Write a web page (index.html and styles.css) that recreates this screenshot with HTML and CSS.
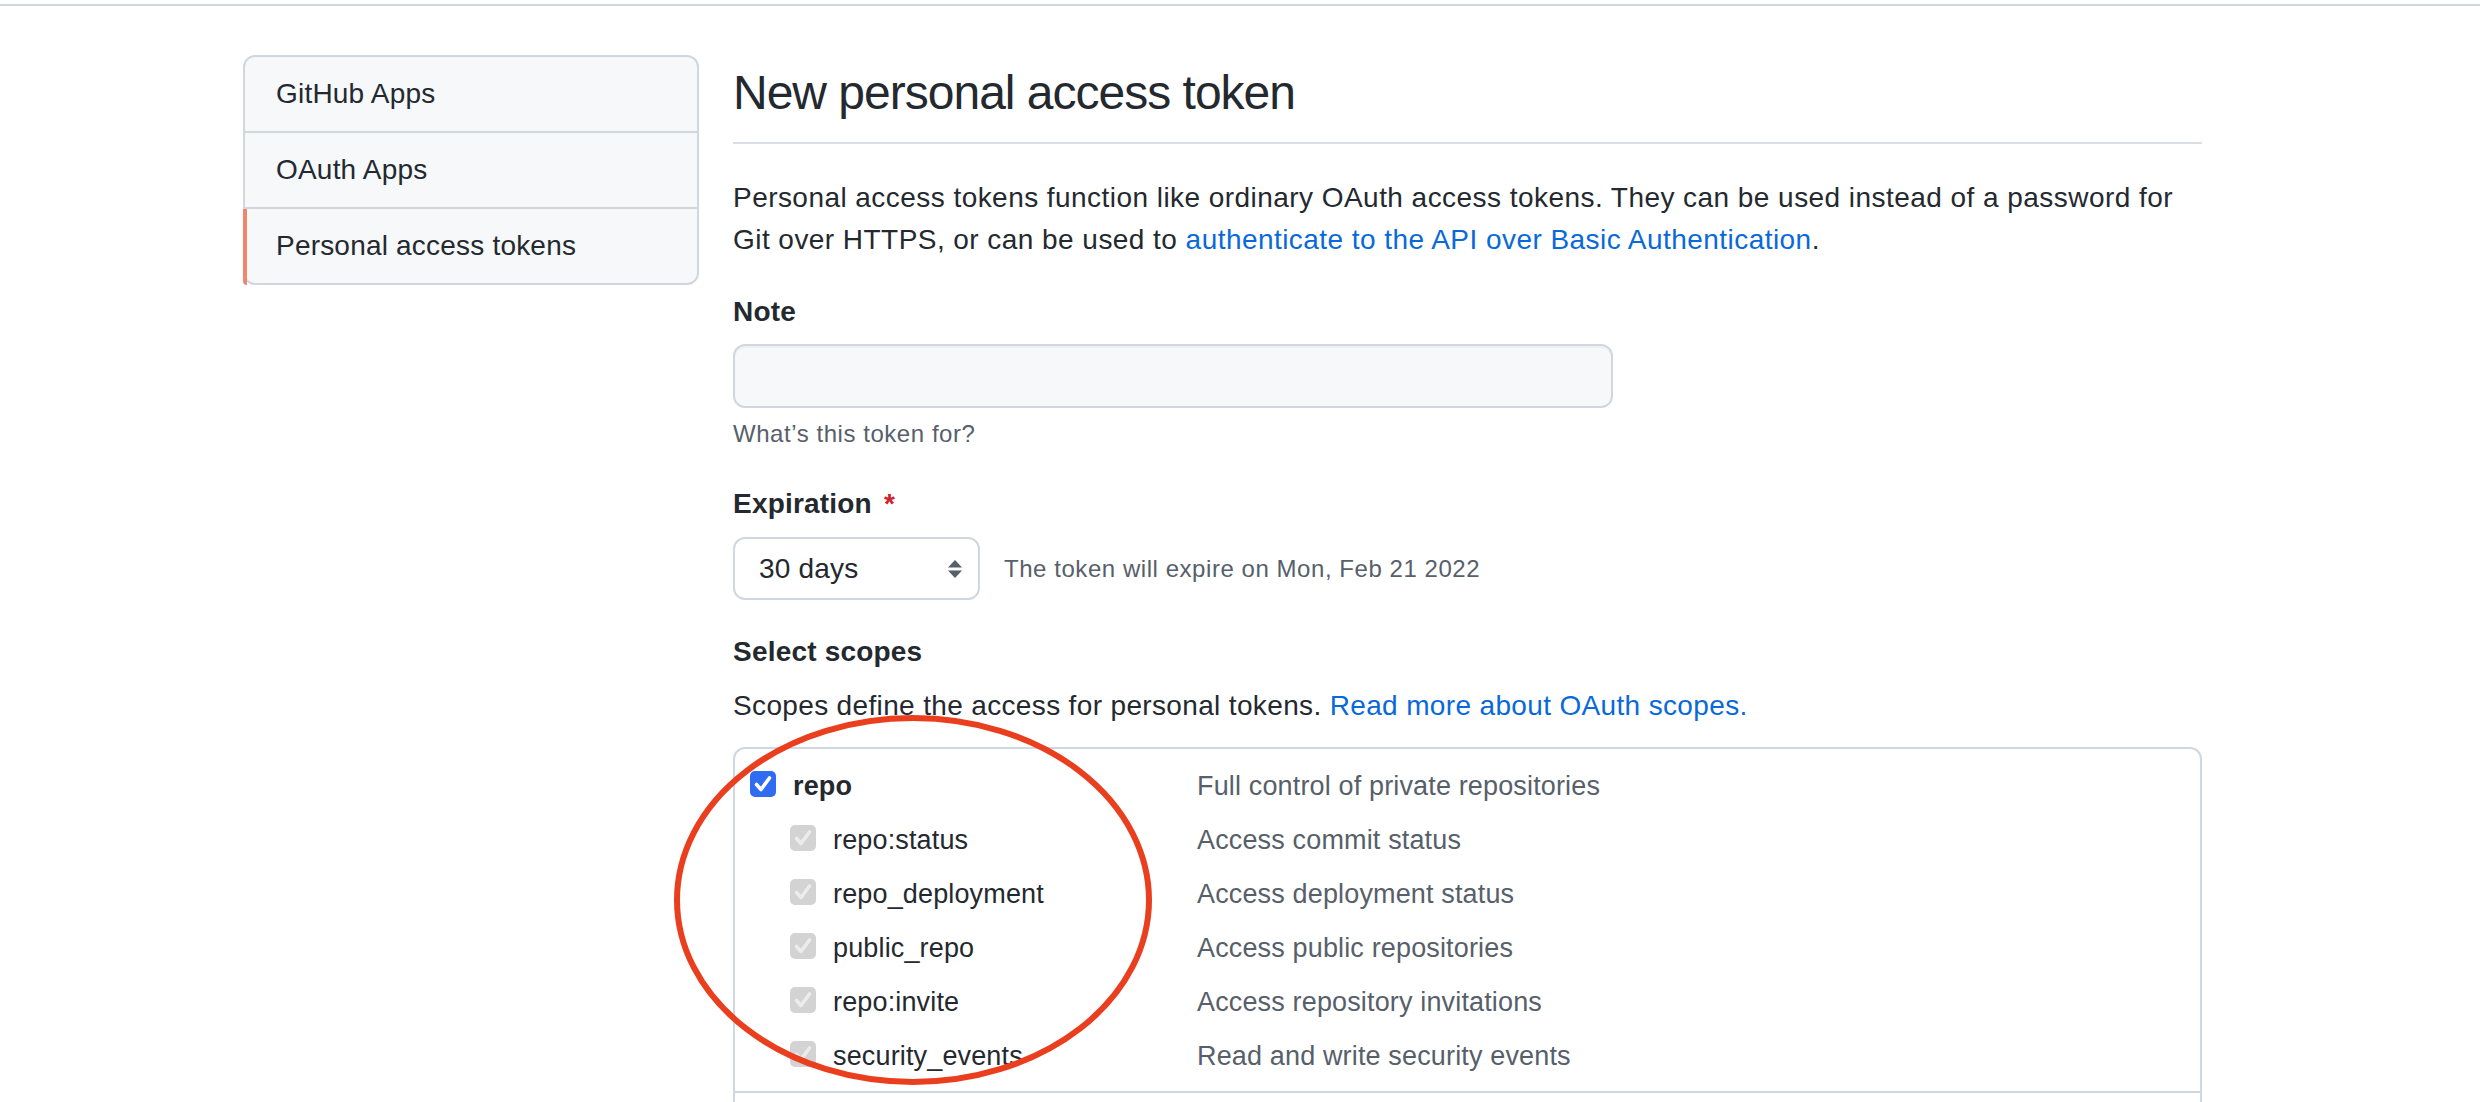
FILE: index.html
```html
<!DOCTYPE html>
<html lang="en">
<head>
<meta charset="utf-8">
<title>New personal access token</title>
<link rel="stylesheet" href="styles.css">
</head>
<body>
<div class="page">
  <div class="topbar"></div>
  <div class="layout">
    <nav class="side-nav">
      <a class="nav-item">GitHub Apps</a>
      <a class="nav-item">OAuth Apps</a>
      <a class="nav-item selected">Personal access tokens</a>
    </nav>
    <main class="main">
      <h2 class="subhead">New personal access token</h2>
      <p class="intro">Personal access tokens function like ordinary OAuth access tokens. They can be used instead of a password for Git over HTTPS, or can be used to <a class="link">authenticate to the API over Basic Authentication</a>.</p>

      <label class="field-label note-label">Note</label>
      <div class="text-input"></div>
      <p class="note">What’s this token for?</p>

      <label class="field-label exp-label">Expiration <span class="required">*</span></label>
      <div class="exp-row">
        <div class="select">
          <span>30 days</span>
          <svg class="select-arrows" width="16" height="22" viewBox="0 0 16 22"><path d="M8 2 L15 9.5 H1 Z" fill="#57606a"/><path d="M8 20 L15 12.5 H1 Z" fill="#57606a"/></svg>
        </div>
        <span class="exp-text">The token will expire on Mon, Feb 21 2022</span>
      </div>

      <label class="field-label scopes-label">Select scopes</label>
      <p class="scopes-desc">Scopes define the access for personal tokens. <a class="link">Read more about OAuth scopes.</a></p>

      <div class="scopes">
        <div class="scope-group">
          <div class="scope-row">
            <div class="scope-name parent"><span class="cb checked"><svg width="26" height="26" viewBox="0 0 26 26"><path d="M6.5 13.5 L11 18.5 L19.5 7" fill="none" stroke="#fff" stroke-width="3.6" stroke-linecap="round" stroke-linejoin="round"/></svg></span><b>repo</b></div>
            <div class="scope-desc">Full control of private repositories</div>
          </div>
          <div class="scope-row">
            <div class="scope-name child"><span class="cb disabled"><svg width="26" height="26" viewBox="0 0 26 26"><path d="M6.5 13.5 L11 18.5 L19.5 7" fill="none" stroke="#ececec" stroke-width="3.6" stroke-linecap="round" stroke-linejoin="round"/></svg></span>repo:status</div>
            <div class="scope-desc">Access commit status</div>
          </div>
          <div class="scope-row">
            <div class="scope-name child"><span class="cb disabled"><svg width="26" height="26" viewBox="0 0 26 26"><path d="M6.5 13.5 L11 18.5 L19.5 7" fill="none" stroke="#ececec" stroke-width="3.6" stroke-linecap="round" stroke-linejoin="round"/></svg></span>repo_deployment</div>
            <div class="scope-desc">Access deployment status</div>
          </div>
          <div class="scope-row">
            <div class="scope-name child"><span class="cb disabled"><svg width="26" height="26" viewBox="0 0 26 26"><path d="M6.5 13.5 L11 18.5 L19.5 7" fill="none" stroke="#ececec" stroke-width="3.6" stroke-linecap="round" stroke-linejoin="round"/></svg></span>public_repo</div>
            <div class="scope-desc">Access public repositories</div>
          </div>
          <div class="scope-row">
            <div class="scope-name child"><span class="cb disabled"><svg width="26" height="26" viewBox="0 0 26 26"><path d="M6.5 13.5 L11 18.5 L19.5 7" fill="none" stroke="#ececec" stroke-width="3.6" stroke-linecap="round" stroke-linejoin="round"/></svg></span>repo:invite</div>
            <div class="scope-desc">Access repository invitations</div>
          </div>
          <div class="scope-row">
            <div class="scope-name child"><span class="cb disabled"><svg width="26" height="26" viewBox="0 0 26 26"><path d="M6.5 13.5 L11 18.5 L19.5 7" fill="none" stroke="#ececec" stroke-width="3.6" stroke-linecap="round" stroke-linejoin="round"/></svg></span>security_events</div>
            <div class="scope-desc">Read and write security events</div>
          </div>
        </div>
        <div class="scope-group next"></div>
      </div>
    </main>
  </div>
  <svg class="annotation" width="490" height="380" viewBox="0 0 490 380"><ellipse cx="243" cy="188" rx="236" ry="182" fill="none" stroke="#ea3f1e" stroke-width="6"/></svg>
</div>
</body>
</html>
```
FILE: styles.css
```css
html, body {
  margin: 0;
  padding: 0;
  background: #ffffff;
}
body {
  height: 1102px;
  overflow: hidden;
  font-family: "Liberation Sans", Arial, sans-serif;
  color: #24292f;
  font-size: 28px;
  letter-spacing: 0.2px;
}
.page {
  position: relative;
  width: 2480px;
  height: 1102px;
  overflow: hidden;
}
.topbar {
  height: 4px;
  border-bottom: 2px solid #d0d7de;
}
.layout {
  display: flex;
  align-items: flex-start;
  margin-top: 49px;
  padding-left: 243px;
  gap: 34px;
}
.side-nav {
  width: 456px;
  box-sizing: border-box;
  border: 2px solid #d0d7de;
  border-radius: 12px;
  background: #f6f8fa;
  display: flex;
  flex-direction: column;
}
.nav-item {
  position: relative;
  display: block;
  padding: 16px 31px 16px 31px;
  line-height: 42px;
  font-size: 28px;
  color: #24292f;
  border-bottom: 2px solid #d0d7de;
}
.nav-item:last-child {
  border-bottom: none;
}
.nav-item.selected::before {
  content: "";
  position: absolute;
  left: -2px;
  top: 0;
  bottom: -2px;
  width: 4px;
  background: #f0866b;
  border-bottom-left-radius: 6px;
}
.main {
  width: 1469px;
  display: flex;
  flex-direction: column;
  align-items: flex-start;
}
.subhead {
  align-self: stretch;
  margin: 0;
  padding: 2px 0 13px;
  font-size: 48px;
  line-height: 72px;
  font-weight: 400;
  letter-spacing: -1px;
  border-bottom: 2px solid #d8dee4;
}
.intro {
  margin: 33px 0 0;
  line-height: 42px;
  letter-spacing: 0.45px;
}
.link {
  color: #0969da;
  text-decoration: none;
}
.field-label {
  display: block;
  font-weight: 700;
  line-height: 40px;
  font-size: 28px;
}
.note-label {
  margin-top: 31px;
}
.text-input {
  margin-top: 12px;
  width: 880px;
  height: 64px;
  box-sizing: border-box;
  border: 2px solid #d0d7de;
  border-radius: 12px;
  background: #f6f8fa;
  box-shadow: inset 0 2px 0 rgba(208, 215, 222, 0.2);
}
.note {
  margin: 8px 0 0;
  font-size: 24px;
  line-height: 36px;
  color: #57606a;
  letter-spacing: 0.55px;
}
.exp-label {
  margin-top: 32px;
}
.required {
  color: #cf222e;
  margin-left: 4px;
}
.exp-row {
  margin-top: 13px;
  display: flex;
  align-items: center;
  gap: 24px;
}
.select {
  width: 247px;
  height: 63px;
  box-sizing: border-box;
  border: 2px solid #d0d7de;
  border-radius: 12px;
  background: #ffffff;
  display: flex;
  align-items: center;
  justify-content: space-between;
  padding: 0 15px 0 24px;
  font-size: 28px;
  color: #24292f;
}
.select-arrows {
  display: block;
}
.exp-text {
  font-size: 24px;
  color: #57606a;
  letter-spacing: 0.55px;
}
.scopes-label {
  margin-top: 32px;
}
.scopes-desc {
  margin: 13px 0 0;
  line-height: 42px;
  letter-spacing: 0.35px;
}
.scopes {
  margin-top: 20px;
  align-self: stretch;
  border: 2px solid #d0d7de;
  border-radius: 12px;
}
.scope-group {
  padding: 10px 0 8px;
  border-bottom: 2px solid #d0d7de;
}
.scope-group.next {
  height: 60px;
  padding: 0;
  border-bottom: none;
}
.scope-row {
  display: grid;
  grid-template-columns: 462px 1fr;
  height: 54px;
  align-items: center;
  font-size: 27px;
  letter-spacing: 0.15px;
}
.scope-name {
  display: flex;
  align-items: center;
  gap: 17px;
  color: #24292f;
}
.scope-name.parent {
  padding-left: 15px;
}
.scope-name.child {
  padding-left: 55px;
}
.scope-name b {
  font-weight: 700;
}
.cb {
  width: 26px;
  height: 26px;
  border-radius: 5px;
  box-sizing: border-box;
  margin-bottom: 4px;
  flex: none;
  display: block;
}
.cb svg {
  display: block;
}
.cb.checked {
  background: #2f6cf1;
}
.cb.disabled {
  background: #d3d3d3;
}
.scope-desc {
  color: #57606a;
}
.annotation {
  position: absolute;
  left: 670px;
  top: 712px;
  pointer-events: none;
}
```
